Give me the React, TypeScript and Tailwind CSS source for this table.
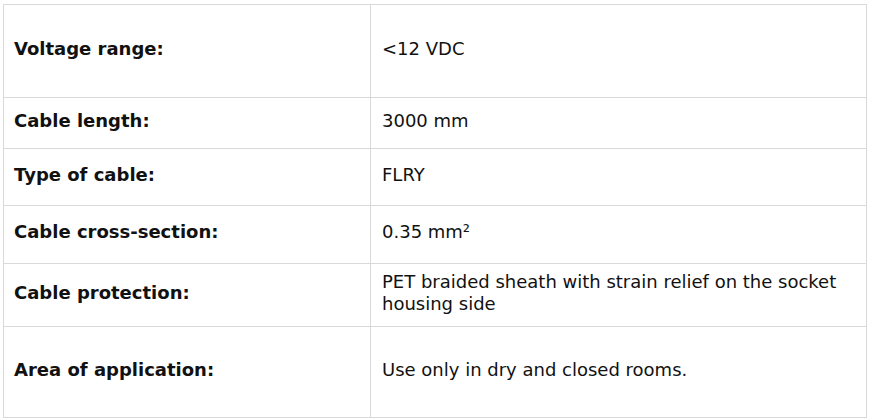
const rows: { label: string; value: string; h: string }[] = [
  { label: 'Voltage range:', value: '<12 VDC', h: 'h-[93px]' },
  { label: 'Cable length:', value: '3000 mm', h: 'h-[51px]' },
  { label: 'Type of cable:', value: 'FLRY', h: 'h-[57px]' },
  { label: 'Cable cross-section:', value: '0.35 mm²', h: 'h-[58px]' },
  {
    label: 'Cable protection:',
    value: 'PET braided sheath with strain relief on the socket housing side',
    h: 'h-[63px]',
  },
  { label: 'Area of application:', value: 'Use only in dry and closed rooms.', h: 'h-[91px]' },
];

export default function App() {
  return (
    <div className="w-[869px] h-[420px] bg-white pt-[4px] pl-[3px] font-['DejaVu_Sans',Verdana,sans-serif] text-[18px] leading-[22px] text-[#111]">
      <table className="w-[864px] border-collapse table-fixed">
        <colgroup>
          <col className="w-[367px]" />
          <col />
        </colgroup>
        <tbody>
          {rows.map((r) => (
            <tr key={r.label} className={r.h}>
              <td className="border border-[#d9d9d9] px-[10px] pb-[5px] align-middle font-bold">{r.label}</td>
              <td className="border border-[#d9d9d9] pl-[11px] pr-[10px] pb-[5px] align-middle">{r.value}</td>
            </tr>
          ))}
        </tbody>
      </table>
    </div>
  );
}
